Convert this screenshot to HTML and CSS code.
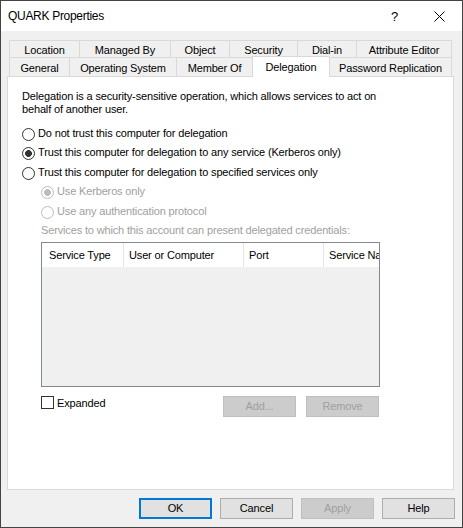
FILE: index.html
```html
<!DOCTYPE html>
<html lang="en">
<head>
<meta charset="utf-8">
<title>QUARK Properties</title>
<link rel="stylesheet" href="styles.css">
</head>
<body>
<div class="window">
  <div class="titlebar">
    <span class="title">QUARK Properties</span>
    <div class="caption-btn help">?</div>
    <div class="caption-btn close">
      <svg width="11" height="11" viewBox="0 0 11 11"><path d="M0.5 0.5 L10.5 10.5 M10.5 0.5 L0.5 10.5" stroke="#000" stroke-width="1" fill="none"/></svg>
    </div>
  </div>
  <div class="client">
    <div class="tabs">
      <div class="tab-row row-back">
        <div class="tab">Location</div>
        <div class="tab">Managed By</div>
        <div class="tab">Object</div>
        <div class="tab">Security</div>
        <div class="tab">Dial-in</div>
        <div class="tab">Attribute Editor</div>
      </div>
      <div class="tab-row row-front">
        <div class="tab">General</div>
        <div class="tab">Operating System</div>
        <div class="tab">Member Of</div>
        <div class="tab selected">Delegation</div>
        <div class="tab">Password Replication</div>
      </div>
    </div>
    <div class="panel">
      <p class="desc">Delegation is a security-sensitive operation, which allows services to act on<br>behalf of another user.</p>
      <div class="radio first"><span class="rb"></span><span>Do not trust this computer for delegation</span></div>
      <div class="radio"><span class="rb checked"></span><span>Trust this computer for delegation to any service (Kerberos only)</span></div>
      <div class="radio wide"><span class="rb"></span><span>Trust this computer for delegation to specified services only</span></div>
      <div class="sub">
        <div class="radio disabled"><span class="rb checked"></span><span>Use Kerberos only</span></div>
        <div class="radio disabled wide"><span class="rb"></span><span>Use any authentication protocol</span></div>
        <div class="list-label">Services to which this account can present delegated credentials:</div>
        <div class="listview">
          <div class="lv-header">
            <div class="col c1">Service Type</div>
            <div class="col c2">User or Computer</div>
            <div class="col c3">Port</div>
            <div class="col c4">Service Name</div>
          </div>
          <div class="lv-body"></div>
        </div>
        <div class="list-actions">
          <div class="check"><span class="cb"></span><span class="check-text">Expanded</span></div>
          <div class="action-btns">
            <button class="btn" disabled>Add...</button>
            <button class="btn" disabled>Remove</button>
          </div>
        </div>
      </div>
    </div>
    <div class="dialog-buttons">
      <button class="btn default">OK</button>
      <button class="btn">Cancel</button>
      <button class="btn" disabled>Apply</button>
      <button class="btn">Help</button>
    </div>
  </div>
</div>
</body>
</html>
```
FILE: styles.css
```css
* { box-sizing: border-box; }

body {
  margin: 0;
  font-family: "Liberation Sans", Arial, sans-serif;
  font-size: 11px;
  line-height: 13px;
  letter-spacing: -0.15px;
  color: #000;
}

.window {
  width: 463px;
  height: 528px;
  border: 1px solid #434343;
  background: #f0f0f0;
  display: flex;
  flex-direction: column;
}

.titlebar {
  flex: none;
  height: 30px;
  background: #fff;
  display: flex;
  align-items: center;
}

.title {
  flex: 1;
  padding-left: 7px;
  font-size: 12px;
  line-height: 15px;
  letter-spacing: -0.3px;
}

.caption-btn {
  width: 46px;
  height: 30px;
  display: flex;
  align-items: center;
  justify-content: center;
}

.help {
  font-size: 13px;
  line-height: 15px;
  padding-left: 3px;
}

.close svg { display: block; }

.client {
  flex: 1;
  display: flex;
  flex-direction: column;
  padding: 9px 8px 8px 6px;
}

.tabs {
  flex: none;
  height: 36px;
  margin: 0 2px;
}

.tab-row { display: grid; }

.row-back {
  height: 17px;
  grid-template-columns: 70px 91px 59px 68px 59px 96px;
}

.row-front {
  height: 19px;
  grid-template-columns: 60px 107px 76px 77px 123px;
}

.tab {
  display: flex;
  align-items: center;
  justify-content: center;
  white-space: nowrap;
  padding-top: 3px;
  background: #f0f0f0;
  border-top: 1px solid #d9d9d9;
  border-left: 1px solid #d9d9d9;
}

.tab:last-child { border-right: 1px solid #d9d9d9; }

.tab.selected {
  position: relative;
  z-index: 1;
  margin-top: -1px;
  margin-bottom: -1px;
  padding-top: 0;
  background: #fff;
}

.panel {
  flex: 1;
  background: #fff;
  border: 1px solid #d9d9d9;
  padding: 13px 14px 0 14px;
}

.desc { margin: 0; white-space: nowrap; }

.radio {
  display: flex;
  align-items: center;
  gap: 3px;
  height: 13px;
  margin-top: 6px;
  white-space: nowrap;
}

.radio.first { margin-top: 11px; }
.radio.wide { margin-top: 7px; }

.rb {
  flex: none;
  width: 13px;
  height: 13px;
  margin-top: 2px;
  border-radius: 50%;
  border: 1px solid #333;
  background: #fff;
}

.rb.checked {
  background: radial-gradient(circle, #333 0 3.1px, #fff 3.7px);
}

.radio.disabled { color: #a0a0a0; }
.radio.disabled .rb { border-color: #bcbcbc; }
.radio.disabled .rb.checked {
  background: radial-gradient(circle, #bcbcbc 0 3.1px, #fff 3.7px);
}

.sub { padding-left: 19px; }

.list-label {
  margin-top: 6px;
  color: #a0a0a0;
  white-space: nowrap;
}

.listview {
  margin-top: 5px;
  width: 339px;
  height: 145px;
  border: 1px solid #828790;
  overflow: hidden;
  display: flex;
  flex-direction: column;
}

.lv-header {
  flex: none;
  height: 24px;
  background: #fff;
  display: flex;
}

.col {
  flex: none;
  display: flex;
  align-items: center;
  padding-left: 5px;
  white-space: nowrap;
  overflow: hidden;
  border-right: 1px solid #e5e5e5;
}

.c1 { width: 82px; padding-left: 7px; }
.c2 { width: 120px; }
.c3 { width: 80px; }
.c4 { width: 100px; border-right: none; }

.lv-body { flex: 1; background: #f0f0f0; }

.list-actions {
  margin-top: 9px;
  width: 339px;
  display: flex;
  align-items: flex-start;
  justify-content: space-between;
}

.check {
  display: flex;
  align-items: flex-start;
  gap: 3px;
}

.cb {
  flex: none;
  width: 13px;
  height: 13px;
  border: 1px solid #333;
  background: #fff;
}

.check-text { padding-top: 1px; }

.action-btns {
  display: flex;
  gap: 10px;
  margin-right: 1px;
}

.btn {
  width: 73px;
  height: 21px;
  padding: 0;
  margin: 0;
  font: inherit;
  letter-spacing: inherit;
  color: #000;
  background: #e1e1e1;
  border: 1px solid #adadad;
  border-radius: 0;
}

.btn.default { border: 2px solid #0078d7; }

.btn:disabled {
  background: #cccccc;
  border-color: #bfbfbf;
  color: #a0a0a0;
}

.dialog-buttons {
  flex: none;
  display: flex;
  justify-content: flex-end;
  gap: 8px;
  margin-top: 8px;
  margin-right: -1px;
}
```
